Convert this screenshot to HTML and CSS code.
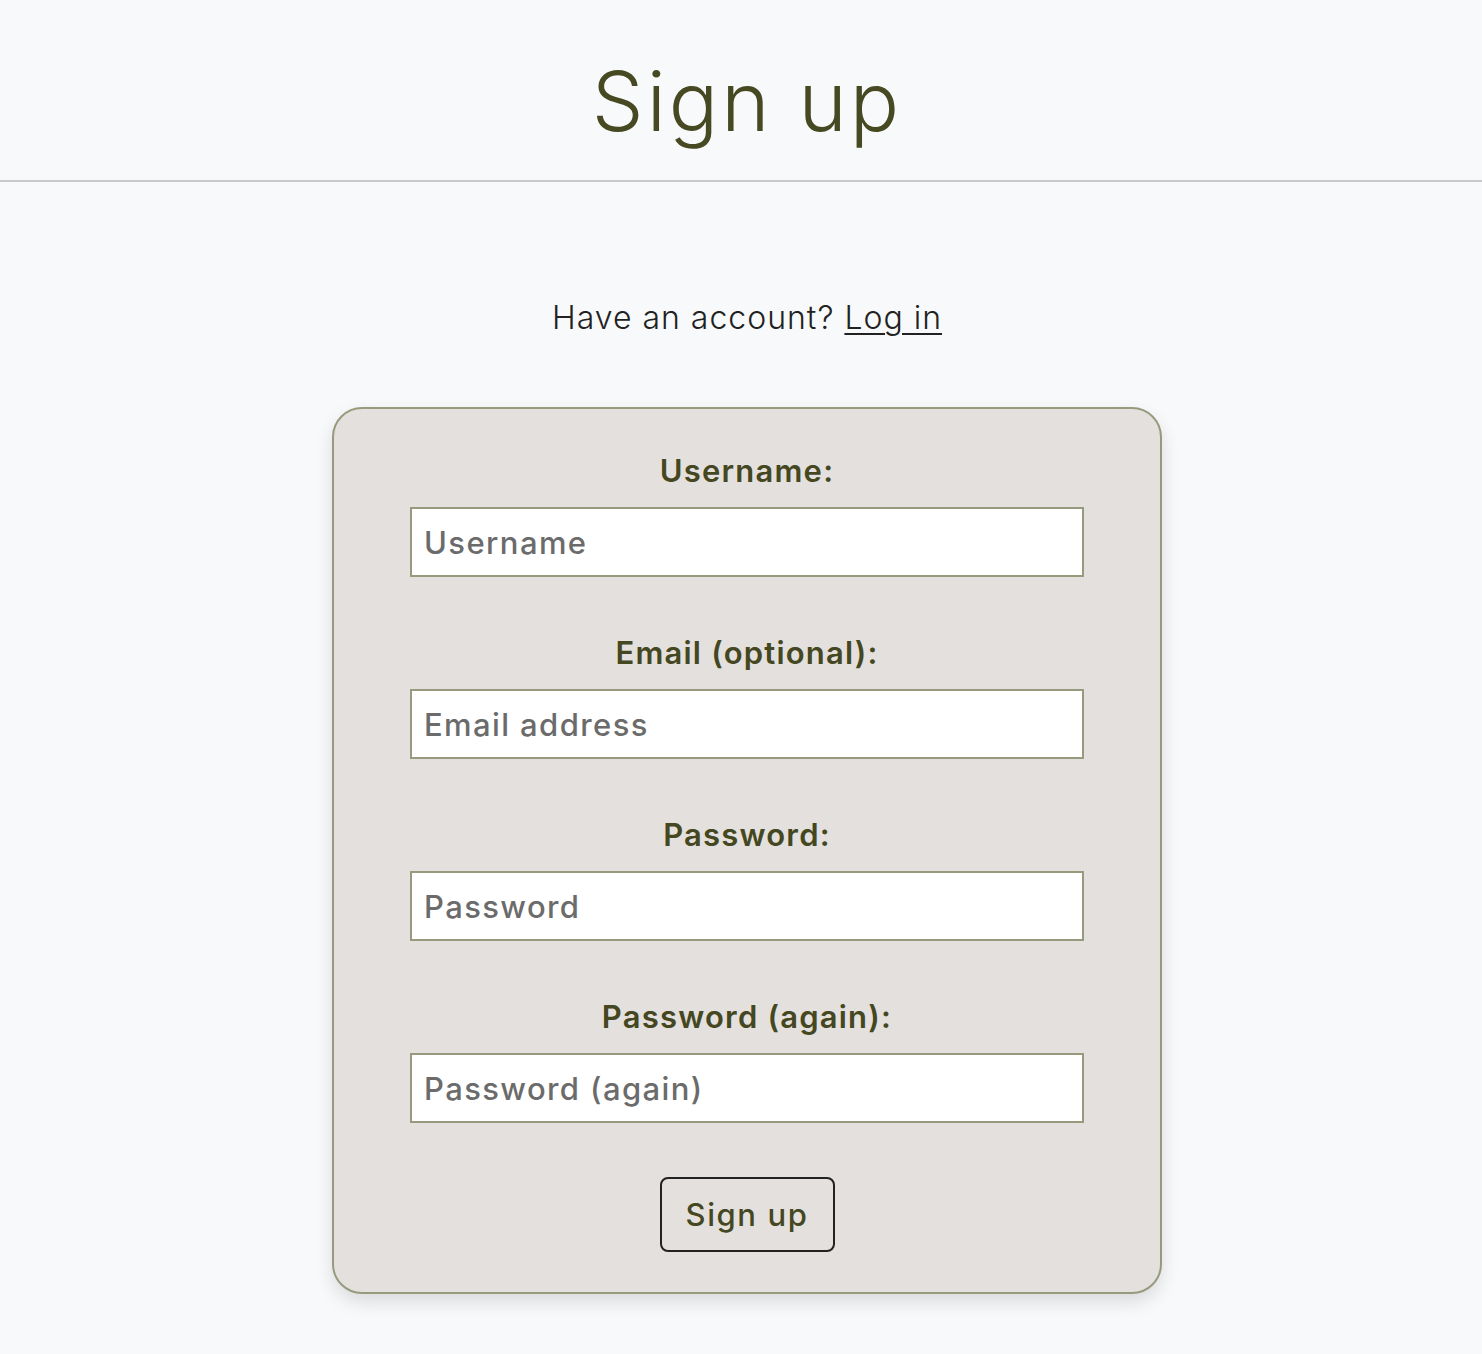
FILE: index.html
```html
<!DOCTYPE html>
<html lang="en">
<head>
<meta charset="utf-8">
<title>Sign up</title>
<link rel="stylesheet" href="styles.css">
</head>
<body>
<header class="site-header">
  <h1 class="page-title">Sign up</h1>
</header>
<main class="content">
  <p class="login-hint">Have an account? <a href="#" class="login-link">Log in</a></p>
  <form class="signup-card">
    <div class="field">
      <label class="field-label" for="username">Username:</label>
      <input class="field-input" id="username" type="text" placeholder="Username">
    </div>
    <div class="field">
      <label class="field-label" for="email">Email (optional):</label>
      <input class="field-input" id="email" type="email" placeholder="Email address">
    </div>
    <div class="field">
      <label class="field-label" for="password1">Password:</label>
      <input class="field-input" id="password1" type="password" placeholder="Password">
    </div>
    <div class="field">
      <label class="field-label" for="password2">Password (again):</label>
      <input class="field-input" id="password2" type="password" placeholder="Password (again)">
    </div>
    <button class="submit-btn" type="submit">Sign up</button>
  </form>
</main>
</body>
</html>
```
FILE: styles.css
```css
* { box-sizing: border-box; }
html, body {
  margin: 0;
  padding: 0;
  background: #f8f9fa;
  font-family: Inter, "Open Sans", "DejaVu Sans", sans-serif;
  color: #212121;
}
.site-header {
  height: 182px;
  border-bottom: 2px solid #c9c9c9;
  display: flex;
  justify-content: center;
  padding-left: 12px;
}
.page-title {
  margin: 0;
  padding-top: 52px;
  font-size: 82px;
  line-height: 100px;
  font-weight: 300;
  color: #464921;
  letter-spacing: 3px;
}
.content {
  display: flex;
  flex-direction: column;
  align-items: center;
  padding-left: 12px;
}
.login-hint {
  margin: 116px 0 0;
  font-size: 32px;
  line-height: 40px;
  font-weight: 300;
  color: #222;
  letter-spacing: 1px;
}
.login-link {
  color: #222;
  text-decoration: underline;
  text-underline-offset: 4px;
  text-decoration-thickness: 2px;
}
.signup-card {
  margin-top: 69px;
  width: 830px;
  background: #e4e0dd;
  border: 2px solid #989a7d;
  border-radius: 30px;
  box-shadow: 0 8px 18px rgba(0,0,0,0.12);
  padding: 42px 76px 40px;
  display: flex;
  flex-direction: column;
  align-items: center;
  margin-bottom: 60px;
}
.field {
  width: 100%;
  display: flex;
  flex-direction: column;
  align-items: center;
  margin-bottom: 56px;
}
.field-label {
  font-size: 31px;
  line-height: 40px;
  font-weight: 600;
  color: #44471f;
  margin-bottom: 16px;
  letter-spacing: 1.2px;
}
.field-input {
  width: 100%;
  height: 70px;
  border: 2px solid #989a7d;
  background: #fff;
  padding: 0 12px;
  font-family: inherit;
  font-size: 31px;
  color: #333;
  outline: none;
  border-radius: 0;
  letter-spacing: 1.4px;
}
.field-input::placeholder {
  color: #6b6b6b;
  font-weight: 500;
}
.submit-btn {
  margin-top: -2px;
  width: 175px;
  height: 75px;
  border: 2px solid #222;
  border-radius: 8px;
  background: transparent;
  font-family: inherit;
  font-size: 31px;
  font-weight: 500;
  color: #44471f;
  letter-spacing: 1.6px;
  padding: 0;
}
```
